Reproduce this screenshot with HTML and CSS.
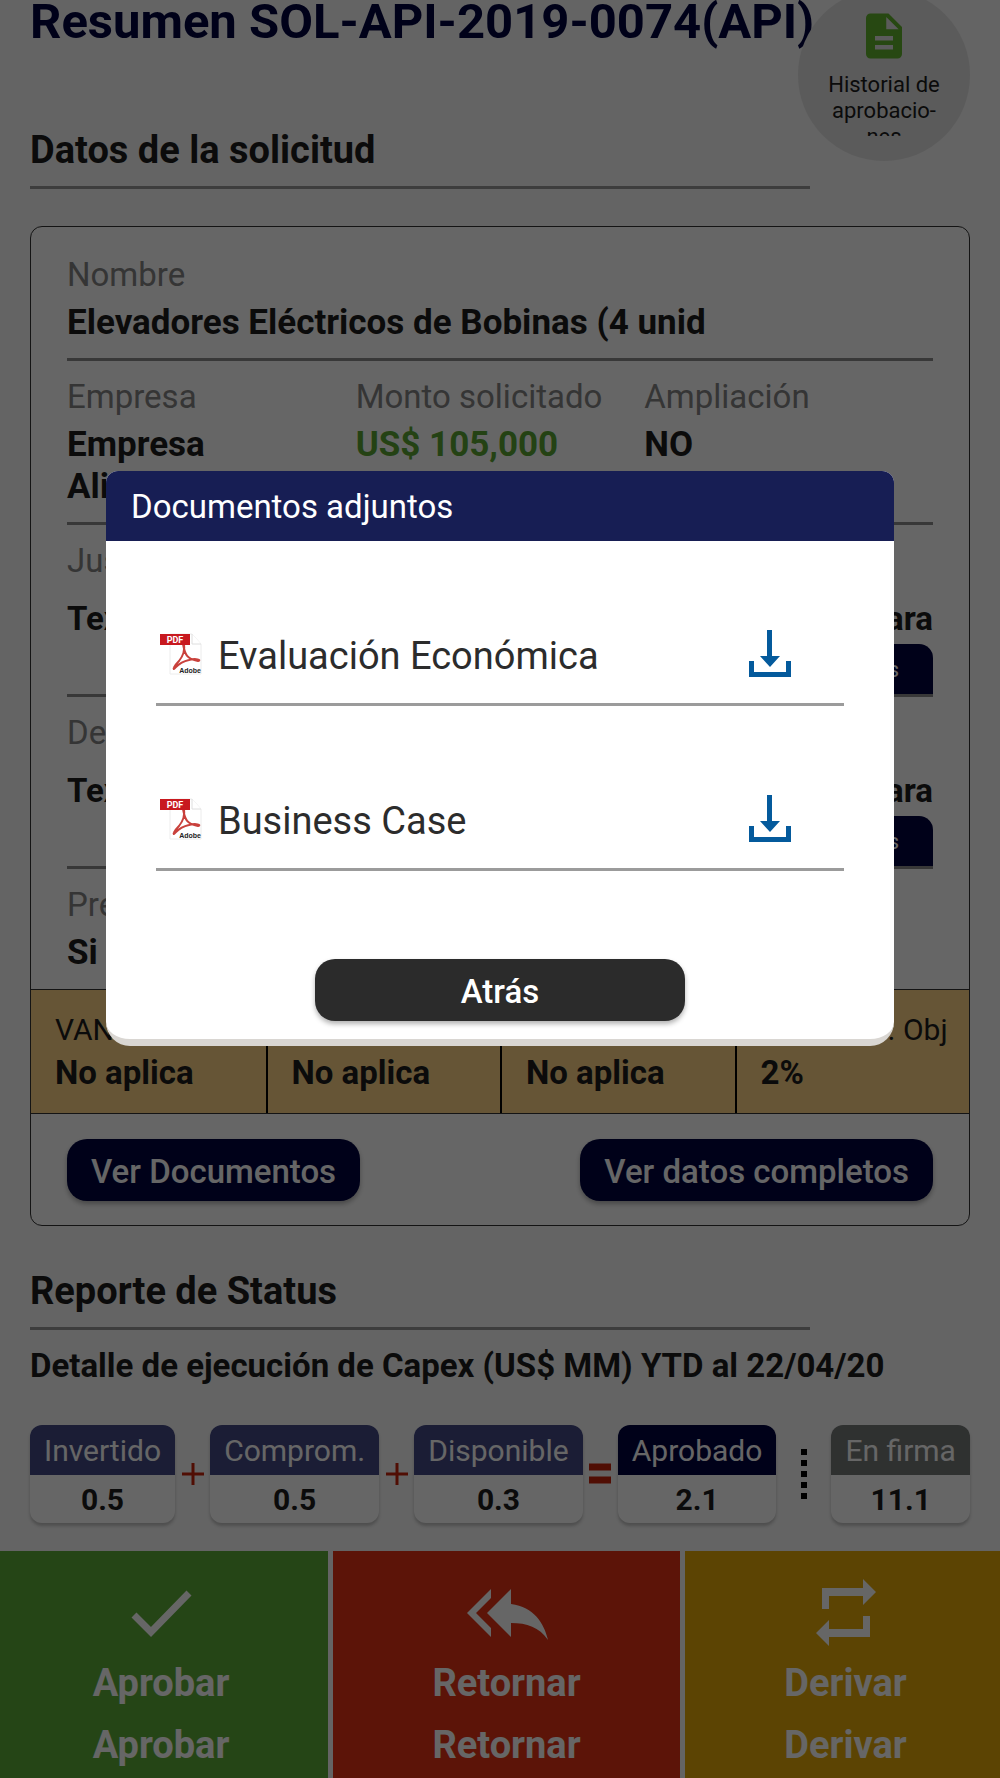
FILE: index.html
```html
<!DOCTYPE html>
<html lang="es">
<head>
<meta charset="utf-8">
<meta name="viewport" content="width=device-width, initial-scale=1">
<title>Resumen de solicitud</title>
<link rel="stylesheet" href="styles.css">
</head>
<body>
<div class="page">
  <main class="content">
    <h1 class="title">Resumen SOL-API-2019-0074(API)</h1>
    <button class="history" type="button">
      <svg class="history-icon" viewBox="4 2 16 20" aria-hidden="true"><path fill="#62b32e" d="M14 2H6c-1.100 0-2 .9-2 2v16c0 1.100.9 2 2 2h12c1.100 0 2-.9 2-2V8l-6-6zm2 16H8v-2h8v2zm0-4H8v-2h8v2zm-3-5V3.500L18.500 9H13z"/></svg>
      <span class="history-text">Historial de aprobacio-<br>nes</span>
    </button>

    <h2 class="section-title">Datos de la solicitud</h2>
    <section class="card">
      <div class="fields">
        <div class="field-row">
          <div class="field"><span class="label">Nombre</span><strong class="value">Elevadores Eléctricos de Bobinas (4 unid</strong></div>
        </div>
        <div class="field-row field-row-thirds">
          <div class="field"><span class="label">Empresa</span><strong class="value">Empresa<br>Alimentos</strong></div>
          <div class="field"><span class="label">Monto solicitado</span><strong class="value value-money">US$ 105,000</strong></div>
          <div class="field"><span class="label">Ampliación</span><strong class="value">NO</strong></div>
        </div>
        <div class="field-row field-long">
          <span class="label">Justificación</span>
          <strong class="excerpt">Texto de ejemplo de la solicitud para</strong>
          <button class="more" type="button">Ver más</button>
        </div>
        <div class="field-row field-long">
          <span class="label">Descripción</span>
          <strong class="excerpt">Texto de ejemplo de la solicitud para</strong>
          <button class="more" type="button">Ver más</button>
        </div>
        <div class="field-row field-row-last">
          <div class="field"><span class="label">Presupuestado</span><strong class="value">Si</strong></div>
        </div>
      </div>
      <div class="metrics">
        <div class="metric"><span class="metric-label">VAN</span><strong class="metric-value">No aplica</strong></div>
        <div class="metric"><span class="metric-label">Payback</span><strong class="metric-value">No aplica</strong></div>
        <div class="metric"><span class="metric-label">TIR</span><strong class="metric-value">No aplica</strong></div>
        <div class="metric"><span class="metric-label">% Avance. Obj</span><strong class="metric-value">2%</strong></div>
      </div>
      <div class="card-actions">
        <button class="pill pill-navy" type="button">Ver Documentos</button>
        <button class="pill pill-navy" type="button">Ver datos completos</button>
      </div>
    </section>

    <h2 class="section-title">Reporte de Status</h2>
    <h3 class="subtitle">Detalle de ejecución de Capex (US$ MM) YTD al 22/04/20</h3>
    <div class="capex">
      <div class="chip"><span class="chip-label">Invertido</span><strong class="chip-value">0.5</strong></div>
      <svg class="operator" viewBox="0 0 24 24" aria-label="más"><path d="M1 12h22M12 1v22" stroke="#c8240c" stroke-width="3"/></svg>
      <div class="chip"><span class="chip-label">Comprom.</span><strong class="chip-value">0.5</strong></div>
      <svg class="operator" viewBox="0 0 24 24" aria-label="más"><path d="M1 12h22M12 1v22" stroke="#c8240c" stroke-width="3"/></svg>
      <div class="chip"><span class="chip-label">Disponible</span><strong class="chip-value">0.3</strong></div>
      <svg class="operator" viewBox="0 0 24 24" aria-label="igual"><path d="M1 5h22M1 18h22" stroke="#c8240c" stroke-width="7"/></svg>
      <div class="chip chip-navy"><span class="chip-label">Aprobado</span><strong class="chip-value">2.1</strong></div>
      <svg class="dots" viewBox="0 0 6 52" aria-hidden="true"><path d="M3 1v51" stroke="#000" stroke-width="6" stroke-dasharray="6 5"/></svg>
      <div class="chip chip-gray"><span class="chip-label">En firma</span><strong class="chip-value">11.1</strong></div>
    </div>
  </main>

  <footer class="actions">
    <button class="action action-approve" type="button">
      <svg class="action-icon" viewBox="0 -2 80 80" aria-hidden="true"><path d="M13 41l17 17 38-39" fill="none" stroke="currentColor" stroke-width="7"/></svg>
      <span>Aprobar</span><span>Aprobar</span>
    </button>
    <button class="action action-return" type="button">
      <svg class="action-icon" viewBox="0 -2 80 80" aria-hidden="true"><path fill="currentColor" d="M24 24v-9L0 39l24 24v-9L9 39zM44 30V15L20 39l24 24V49c16 0 28 4 37 17-4-17-14-33-37-36z"/></svg>
      <span>Retornar</span><span>Retornar</span>
    </button>
    <button class="action action-derive" type="button">
      <svg class="action-icon" viewBox="0 -2 80 80" aria-hidden="true"><path fill="currentColor" d="M16 14h41V5l13 13-13 13v-9H23v13h-7zM64 42v21H23v9L10 59l13-13v9h34V42z"/></svg>
      <span>Derivar</span><span>Derivar</span>
    </button>
  </footer>
</div>

<div class="overlay">
  <div class="modal" role="dialog" aria-modal="true" aria-labelledby="modal-title">
    <h2 class="modal-title" id="modal-title">Documentos adjuntos</h2>
    <ul class="documents">
      <li class="document">
        <svg class="pdf" viewBox="0 0 42 42" aria-hidden="true">
          <path d="M10 1h22l9 10v30H10z" fill="#fff" stroke="#ececec"/><path d="M32 1v10h9" fill="#fff" stroke="#dedede"/>
          <path d="M23 11c2 11 4 15 15 17 4-1-2-3-9-1-9 2-11 5-14 8-3 3-1-2 4-7 4-5 6-11 5-17" fill="none" stroke="#c9413c" stroke-width="2"/>
          <rect y="1" width="30" height="11" fill="#c8191f"/>
          <text class="pdf-tag" x="15" y="10" text-anchor="middle">PDF</text>
          <text class="pdf-brand" x="41" y="40" text-anchor="end">Adobe</text>
        </svg>
        <span class="document-name">Evaluación Económica</span>
        <button class="download" type="button" aria-label="Descargar Evaluación Económica">
          <svg class="download-icon" viewBox="0 0 42 48" aria-hidden="true"><path fill="#045a9c" d="M18 0h5v26h8L21 37 11 26h7zM0 31h5v11h32V31h5v16H0z"/></svg>
        </button>
      </li>
      <li class="document">
        <svg class="pdf" viewBox="0 0 42 42" aria-hidden="true">
          <path d="M10 1h22l9 10v30H10z" fill="#fff" stroke="#ececec"/><path d="M32 1v10h9" fill="#fff" stroke="#dedede"/>
          <path d="M23 11c2 11 4 15 15 17 4-1-2-3-9-1-9 2-11 5-14 8-3 3-1-2 4-7 4-5 6-11 5-17" fill="none" stroke="#c9413c" stroke-width="2"/>
          <rect y="1" width="30" height="11" fill="#c8191f"/>
          <text class="pdf-tag" x="15" y="10" text-anchor="middle">PDF</text>
          <text class="pdf-brand" x="41" y="40" text-anchor="end">Adobe</text>
        </svg>
        <span class="document-name">Business Case</span>
        <button class="download" type="button" aria-label="Descargar Business Case">
          <svg class="download-icon" viewBox="0 0 42 48" aria-hidden="true"><path fill="#045a9c" d="M18 0h5v26h8L21 37 11 26h7zM0 31h5v11h32V31h5v16H0z"/></svg>
        </button>
      </li>
    </ul>
    <button class="pill pill-dark" type="button">Atrás</button>
  </div>
</div>
</body>
</html>
```
FILE: styles.css
```css
* {
  box-sizing: border-box;
}

body {
  margin: 0;
  background: #f9f9f9;
  color: #1c1c1c;
  font-family: Roboto, "Liberation Sans", sans-serif;
  font-size: 33px;
}

button {
  margin: 0;
  border: 0;
  padding: 0;
  font: inherit;
  color: inherit;
  cursor: pointer;
}

h1, h2, h3, ul {
  margin: 0;
  padding: 0;
}

svg {
  display: block;
  flex: none;
}

.page {
  position: relative;
  display: flex;
  flex-direction: column;
  min-height: 100vh;
  overflow: hidden;
}

.content {
  padding: 0 30px 28px;
}

.title {
  margin-bottom: 84px;
  color: #000440;
  font-size: 49px;
  font-weight: 700;
  line-height: 44px;
  white-space: nowrap;
}

/* Floating round shortcut in the top corner */
.history {
  position: absolute;
  top: -11px;
  right: 30px;
  display: flex;
  flex-direction: column;
  align-items: center;
  width: 172px;
  height: 172px;
  padding-top: 24px;
  border-radius: 50%;
  background: #e3e3e3;
}

.history-icon {
  width: 36px;
  height: 46px;
}

.history-text {
  width: 124px;
  height: 64px;
  margin-top: 13px;
  overflow: hidden;
  font-size: 22px;
  line-height: 26px;
}

.section-title {
  margin-right: 160px;
  padding-bottom: 14px;
  border-bottom: 3px solid #999;
  font-size: 38px;
  font-weight: 700;
  line-height: 44px;
}

.card {
  margin: 37px 0 43px;
  border: 1px solid #333;
  border-radius: 12px;
  background: #fff;
}

.fields {
  padding: 12px 36px 0;
}

.field-row {
  padding: 17px 0 14px;
  border-bottom: 3px solid #8c8c8c;
}

.field-row-last {
  padding-bottom: 15px;
  border-bottom: 0;
}

.field-row-thirds {
  display: grid;
  grid-template-columns: repeat(3, 1fr);
}

.field {
  display: flex;
  flex-direction: column;
  gap: 8px;
}

.label {
  color: #858585;
  font-size: 33px;
  line-height: 38px;
}

.value {
  font-size: 35px;
  font-weight: 700;
  line-height: 42px;
}

.value-money {
  color: #5aa532;
}

.field-long {
  display: flex;
  flex-direction: column;
  padding-bottom: 0;
}

.excerpt {
  height: 42px;
  margin: 18px 0 4px;
  overflow: hidden;
  font-weight: 700;
  line-height: 42px;
  text-align-last: justify;
}

.more {
  align-self: flex-end;
  height: 50px;
  padding: 0 34px;
  border-radius: 14px 14px 0 0;
  background: #000440;
  color: #fff;
  font-size: 22px;
}

.metrics {
  display: grid;
  grid-template-columns: repeat(4, 1fr);
  border: solid #333;
  border-width: 1px 0;
  background: #ffd488;
}

.metric {
  display: flex;
  flex-direction: column;
  gap: 3px;
  padding: 21px 0 19px 24px;
  white-space: nowrap;
}

.metric + .metric {
  border-left: 2px solid #000;
}

.metric-label {
  font-size: 30px;
  line-height: 38px;
}

.metric-value {
  font-weight: 700;
  line-height: 42px;
}

.card-actions {
  display: flex;
  justify-content: space-between;
  padding: 25px 36px 24px;
}

.pill {
  height: 62px;
  padding: 2px 24px 0;
  border-radius: 20px;
  box-shadow: 0 3px 5px rgba(0, 0, 0, 0.3);
  color: #fff;
  font-weight: 500;
}

.pill-navy {
  background: #000440;
}

.subtitle {
  margin: 15px 0 38px;
  font-size: 33px;
  font-weight: 700;
  line-height: 42px;
  white-space: nowrap;
}

.capex {
  display: flex;
  align-items: center;
  justify-content: space-between;
}

.chip {
  overflow: hidden;
  border-radius: 12px;
  background: #fff;
  box-shadow: 0 3px 3px #c4c4c4;
  text-align: center;
}

.chip-label {
  display: block;
  padding: 2px 14px 0;
  background: #444a85;
  color: #fff;
  font-size: 30px;
  line-height: 48px;
}

.chip-value {
  display: block;
  padding: 3px 0 1px;
  font-size: 30px;
  font-weight: 700;
  line-height: 44px;
}

.chip-navy .chip-label {
  background: #000440;
}

.chip-gray .chip-label {
  background: #777a79;
}

.operator {
  width: 24px;
  height: 24px;
}

.dots {
  width: 6px;
  height: 52px;
  margin: 0 19px;
}

.actions {
  display: grid;
  flex: 1;
  grid-template-columns: 328fr 347fr 315fr;
  gap: 5px;
}

.action {
  display: flex;
  flex-direction: column;
  align-items: center;
  padding: 21px 0 2px;
  color: #fff;
  font-size: 38px;
  font-weight: 700;
  line-height: 62px;
}

.action-icon {
  width: 80px;
  height: 80px;
  overflow: visible;
}

.action-approve {
  padding-right: 6px;
  background: #5dad39;
}

.action-return {
  background: #e63214;
}

.action-derive {
  padding-left: 6px;
  background: #e6aa08;
}

.overlay {
  position: fixed;
  inset: 0;
  padding: 471px 106px 0;
  background: rgba(0, 0, 0, 0.6);
}

.modal {
  display: flex;
  flex-direction: column;
  overflow: hidden;
  border-bottom: 7px solid #d9d6d2;
  border-radius: 12px 12px 24px 24px;
  background: #fff;
}

.modal-title {
  padding: 2px 25px 0;
  background: #171e54;
  color: #fff;
  font-size: 33px;
  font-weight: 400;
  line-height: 68px;
}

.documents {
  padding: 0 50px;
  list-style: none;
}

.document {
  display: flex;
  align-items: center;
  height: 165px;
  padding-top: 64px;
  border-bottom: 3px solid #9b9b9b;
}

.pdf {
  width: 42px;
  height: 42px;
  margin: 0 16px 0 4px;
}

.pdf-tag {
  fill: #fff;
  font-size: 9px;
  font-weight: 700;
}

.pdf-brand {
  fill: #222;
  font-family: "Liberation Sans", sans-serif;
  font-size: 7px;
  font-weight: 700;
}

.document-name {
  flex: 1;
  padding-top: 4px;
  color: #2c2c2c;
  font-size: 38px;
  line-height: 44px;
}

.download {
  margin-right: 53px;
  background: none;
}

.download-icon {
  width: 42px;
  height: 48px;
}

.pill-dark {
  align-self: center;
  width: 370px;
  margin: 88px 0 18px;
  background: #2b2b2b;
}
```
